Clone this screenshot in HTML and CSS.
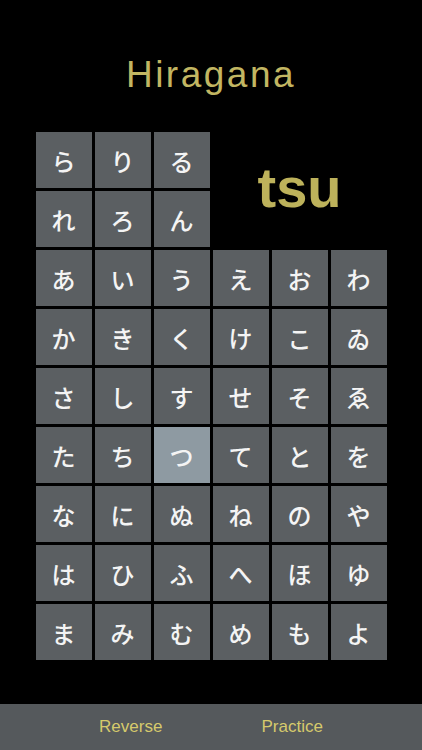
FILE: index.html
```html
<!DOCTYPE html>
<html lang="ja">
<head>
<meta charset="utf-8">
<title>Hiragana</title>
<link rel="stylesheet" href="styles.css">
</head>
<body>
<div class="screen">
  <h1 class="title">Hiragana</h1>
  <div class="grid">
    <div class="cell">ら</div><div class="cell">り</div><div class="cell">る</div>
    <div class="romaji">tsu</div>
    <div class="cell">れ</div><div class="cell">ろ</div><div class="cell">ん</div>
    <div class="cell">あ</div><div class="cell">い</div><div class="cell">う</div><div class="cell">え</div><div class="cell">お</div><div class="cell">わ</div>
    <div class="cell">か</div><div class="cell">き</div><div class="cell">く</div><div class="cell">け</div><div class="cell">こ</div><div class="cell">ゐ</div>
    <div class="cell">さ</div><div class="cell">し</div><div class="cell">す</div><div class="cell">せ</div><div class="cell">そ</div><div class="cell">ゑ</div>
    <div class="cell">た</div><div class="cell">ち</div><div class="cell active">つ</div><div class="cell">て</div><div class="cell">と</div><div class="cell">を</div>
    <div class="cell">な</div><div class="cell">に</div><div class="cell">ぬ</div><div class="cell">ね</div><div class="cell">の</div><div class="cell">や</div>
    <div class="cell">は</div><div class="cell">ひ</div><div class="cell">ふ</div><div class="cell">へ</div><div class="cell">ほ</div><div class="cell">ゆ</div>
    <div class="cell">ま</div><div class="cell">み</div><div class="cell">む</div><div class="cell">め</div><div class="cell">も</div><div class="cell">よ</div>
  </div>
  <div class="toolbar">
    <span class="tool">Reverse</span>
    <span class="tool">Practice</span>
  </div>
</div>
</body>
</html>
```
FILE: styles.css
```css
html, body {
  margin: 0;
  padding: 0;
  background: #000;
}
.screen {
  height: 750px;
  display: flex;
  flex-direction: column;
  align-items: center;
  font-family: "Liberation Sans", Arial, sans-serif;
}
.title {
  margin: 56px 0 0 0;
  font-size: 37px;
  line-height: 37px;
  font-weight: normal;
  letter-spacing: 2.5px;
  color: #c2b662;
}
.grid {
  margin-top: 39px;
  display: grid;
  grid-template-columns: repeat(6, 56px);
  grid-auto-rows: 56px;
  gap: 3px;
}
.cell {
  background: #5b5f62;
  color: #f4f4f4;
  display: flex;
  align-items: center;
  justify-content: center;
  font-family: "Noto Sans CJK JP", sans-serif;
  font-size: 24px;
  font-weight: 500;
}
.cell.active {
  background: #8e9aa2;
}
.romaji {
  grid-column: 4 / 7;
  grid-row: 1 / 3;
  display: flex;
  align-items: center;
  justify-content: center;
  font-size: 56px;
  font-weight: bold;
  color: #bdb25b;
  padding-bottom: 4px;
}
.toolbar {
  margin-top: auto;
  align-self: stretch;
  height: 46px;
  background: #55595c;
  display: flex;
  align-items: center;
  justify-content: space-evenly;
}
.tool {
  font-size: 17px;
  color: #d6ca6c;
}
```
